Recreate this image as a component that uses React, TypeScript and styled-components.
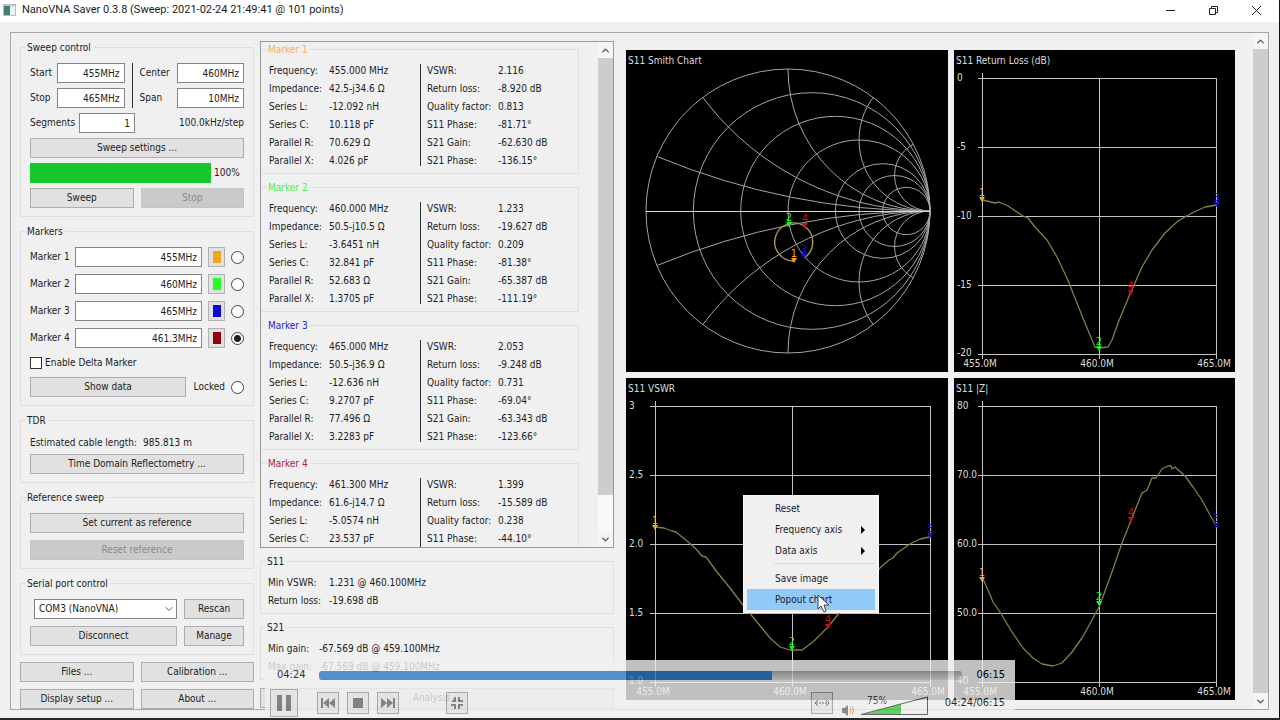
import React from "react";
import styled, { createGlobalStyle } from "styled-components";
import { ChevronDown, ChevronUp } from "lucide-react";

const uiFont = `"DejaVu Sans Condensed", "DejaVu Sans", Tahoma, sans-serif`;
const titleFont = `Roboto, "Open Sans", sans-serif`;

const GlobalStyle = createGlobalStyle`
  * { box-sizing: border-box; }
  body {
    margin: 0;
    background: #f0f0f1;
    color: #1c1c1c;
    font-family: ${uiFont};
    font-size: 10px;
    line-height: 14px;
  }
  button, input, select { font: inherit; color: inherit; margin: 0; }
`;

const Window = styled.div`
  min-height: 100vh;
  display: flex;
  flex-direction: column;
  border-right: 1px solid #111;
  border-bottom: 2px solid #26262a;
`;

const TitleBar = styled.header`
  display: flex;
  align-items: center;
  gap: 6px;
  height: 22px;
  padding: 0 4px 2px 3px;
  background: #fff;
`;

const Title = styled.h1`
  flex: 1;
  margin: 0;
  font: 400 11px/16px ${titleFont};
`;

const WindowButton = styled.button`
  width: 37px;
  height: 20px;
  display: grid;
  place-items: center;
  padding: 0;
  border: 0;
  background: none;
`;

const Frame = styled.main`
  flex: 1;
  display: flex;
  margin: 10px 10px 8px;
  padding-left: 9px;
  border: 1px solid #a6a6a8;
`;

const Controls = styled.div`
  width: 234px;
  flex: none;
  display: flex;
  flex-direction: column;
  gap: 7px;
  padding-top: 7px;
`;

const Group = styled.fieldset<{ $gap?: number }>`
  min-width: 0;
  margin: 0;
  padding: 9px 9px 8px;
  border: 1px solid #dededf;
  & > div { display: flex; flex-direction: column; gap: ${(p) => p.$gap ?? 7}px; }
`;

const Legend = styled.legend<{ $color?: string }>`
  height: 14px;
  padding: 0 2px 0 1px;
  margin-left: -4px;
  line-height: 16px;
  color: ${(p) => p.$color ?? "inherit"};
`;

const Line = styled.div<{ $gap?: number }>`
  display: flex;
  align-items: center;
  gap: ${(p) => p.$gap ?? 7}px;
`;

const SweepGrid = styled.div`
  display: grid;
  grid-template-columns: 27px 1fr 15px 37px 1fr;
  row-gap: 5px;
  align-items: center;
`;

const SweepDivider = styled.div`
  grid-column: 3;
  grid-row: 1 / span 2;
  justify-self: center;
  align-self: stretch;
  width: 1px;
  background: #333;
`;

const FieldLabel = styled.label<{ $width?: number }>`
  flex: none;
  width: ${(p) => (p.$width ? p.$width + "px" : "auto")};
  white-space: nowrap;
`;

const TextBox = styled.input<{ $width?: number }>`
  width: ${(p) => (p.$width ? p.$width + "px" : "100%")};
  min-width: 0;
  height: 20px;
  padding: 0 4px;
  border: 1px solid #858588;
  background: #fff;
  text-align: right;
`;

const PushRight = styled.span`
  margin-left: auto;
`;

const Button = styled.button<{ $width?: number }>`
  flex: ${(p) => (p.$width ? "none" : "1 1 0")};
  width: ${(p) => (p.$width ? p.$width + "px" : "auto")};
  min-height: 20px;
  padding: 0;
  border: 1px solid #adadaf;
  background: #e1e1e2;
  line-height: 18px;
  white-space: nowrap;
  &:disabled { color: #8b8b8d; background: #cacacb; border-color: #c4c4c5; }
`;

const Progress = styled.div`
  flex: 1;
  height: 20px;
  background: #18c72b;
`;

const ColorButton = styled.button<{ $color: string }>`
  flex: none;
  width: 17px;
  height: 20px;
  display: grid;
  place-items: center;
  padding: 0;
  border: 1px solid #b0b0b2;
  background: #e1e1e2;
  &::before { content: ""; width: 8px; height: 12px; background: ${(p) => p.$color}; }
`;

const Radio = styled.input`
  appearance: none;
  flex: none;
  width: 13px;
  height: 13px;
  border: 1px solid #444;
  border-radius: 50%;
  background: #fff;
  &:checked { background: radial-gradient(circle, #222 0 3px, #fff 4px); }
`;

const Check = styled.input`
  appearance: none;
  width: 12px;
  height: 12px;
  border: 1px solid #333;
  background: #fff;
`;

const CheckLabel = styled.label`
  display: flex;
  align-items: center;
  gap: 3px;
  height: 15px;
`;

const SelectWrap = styled.div`
  flex: 1;
  position: relative;
  margin-left: 4px;
  svg { position: absolute; right: 2px; top: 4px; pointer-events: none; }
`;

const Select = styled.select`
  appearance: none;
  display: block;
  width: 100%;
  height: 20px;
  padding: 0 4px;
  border: 1px solid #858588;
  border-radius: 0;
  background: #fff;
`;

const Readings = styled.div`
  width: 354px;
  flex: none;
  display: flex;
  flex-direction: column;
  gap: 6px;
  margin-left: 6px;
  padding-top: 8px;
`;

const MarkerPanel = styled.div`
  flex: 1 1 0;
  min-height: 120px;
  display: flex;
  overflow: hidden;
  border: 1px solid #98989b;
`;

const MarkerList = styled.div`
  flex: 1;
  display: flex;
  flex-direction: column;
  gap: 6px;
  padding-right: 19px;
`;

const DataGroup = styled(Group)<{ $marker?: boolean }>`
  flex: none;
  min-height: ${(p) => (p.$marker ? 132 : 0)}px;
  padding: 5px 7px 4px;
  border-left-color: ${(p) => (p.$marker ? "transparent" : "#dededf")};
  & > div { flex-direction: row; gap: 0; min-height: ${(p) => (p.$marker ? 108 : 0)}px; }
`;

const DataLegend = styled(Legend)`
  margin-left: -2px;
`;

const DataTable = styled.table<{ $label: number; $width?: number }>`
  align-self: flex-start;
  width: ${(p) => (p.$width ? p.$width + "px" : "auto")};
  border-collapse: collapse;
  th, td { height: 18px; padding: 1px 0 0; text-align: left; font-weight: 400; white-space: nowrap; }
  th { width: ${(p) => p.$label}px; min-width: ${(p) => p.$label}px; }
`;

const DataDivider = styled.div`
  width: 1px;
  margin: 3px 6px 3px 0;
  background: #333;
`;

const ScrollBar = styled.div<{ $rest: number }>`
  flex: none;
  width: 15px;
  display: flex;
  flex-direction: column;
  background: #fafafa;
  &::before {
    content: "";
    order: 1;
    flex: 1;
    margin-bottom: ${(p) => p.$rest}px;
    background: #cdcdce;
  }
`;

const ScrollButton = styled.button<{ $last?: boolean }>`
  order: ${(p) => (p.$last ? 2 : 0)};
  width: 100%;
  height: 16px;
  display: grid;
  place-items: center;
  padding: 0;
  border: 0;
  background: #f5f5f5;
  color: #555;
`;

const AnalysisButton = styled(Button)`
  flex: none;
  margin: 2px 0 1px;
`;

const Charts = styled.div`
  flex: 1;
  min-width: 0;
  display: grid;
  grid-template-columns: 322fr 281fr;
  align-content: start;
  gap: 6px;
  padding: 17px 18px 0 12px;
`;

const ChartCell = styled.section`
  position: relative;
  svg.plot { display: block; width: 100%; height: auto; background: #000; }
`;

const Menu = styled.div`
  position: absolute;
  left: 117px;
  top: 117px;
  width: 136px;
  padding: 2px 3px;
  background: #f0f0f1;
  border: 1px solid #fafafa;
`;

const MenuItem = styled.button<{ $active?: boolean }>`
  display: flex;
  align-items: center;
  justify-content: space-between;
  width: 100%;
  height: 21px;
  padding: 0 10px 0 28px;
  border: 0;
  background: ${(p) => (p.$active ? "#91c9f7" : "none")};
`;

const MenuRule = styled.div`
  height: 1px;
  margin: 2px 0 4px 27px;
  background: #d8d8da;
`;

const Cursor = styled.svg`
  position: absolute;
  left: 191px;
  top: 216px;
`;

const PlayerLayer = styled.div`
  position: fixed;
  left: 0;
  right: 0;
  bottom: 2px;
  display: flex;
  justify-content: center;
  pointer-events: none;
`;

const Player = styled.section`
  width: 750px;
  height: 58px;
  pointer-events: auto;
  background: #f0f0f0;
  opacity: 0.8;
  font-size: 11px;
  color: #000;
`;

const SeekRow = styled.div`
  display: flex;
  align-items: center;
  padding: 8px 10px 0 12px;
`;

const Time = styled.span<{ $width?: number }>`
  width: ${(p) => (p.$width ? p.$width + "px" : "auto")};
  white-space: nowrap;
`;

const Seek = styled.input`
  appearance: none;
  flex: 1;
  min-width: 0;
  height: 9px;
  margin-right: 14px;
  border-radius: 3px;
  background:
    linear-gradient(90deg, #2a7ac8 70.5%, transparent 70.5%),
    linear-gradient(#a8a8a8, #dcdcdc);
  &::-webkit-slider-thumb { appearance: none; width: 0; }
`;

const PlayRow = styled.div`
  display: flex;
  align-items: center;
  height: 28px;
  padding: 0 10px 0 5px;
  margin-top: 7px;
`;

const PlayButton = styled.button<{ $size?: number; $before?: number }>`
  flex: none;
  width: ${(p) => p.$size ?? 22}px;
  height: ${(p) => p.$size ?? 22}px;
  display: grid;
  place-items: center;
  margin-left: ${(p) => p.$before ?? 8}px;
  padding: 0;
  border: 1px solid #9a9a9a;
  background: #e4e4e4;
`;

const Spacer = styled.div`
  flex: 1;
`;

const Speaker = styled.svg`
  flex: none;
  margin: 14px 0 0 8px;
`;

const Volume = styled.div`
  position: relative;
  flex: none;
  width: 68px;
  height: 20px;
  margin: 5px 17px 0 6px;
  svg { display: block; }
  input { position: absolute; inset: 0; width: 100%; height: 100%; opacity: 0; }
`;

type Pt = [number, number];
type Mark = { n: number; at: Pt };

const markerColors = ["#f5a81c", "#18f02c", "#1410e0", "#c0101c"];

const markers = [
  { name: "Marker 1", freq: "455MHz", color: "#f0a818" },
  { name: "Marker 2", freq: "460MHz", color: "#20ff20" },
  { name: "Marker 3", freq: "465MHz", color: "#0c08d8" },
  { name: "Marker 4", freq: "461.3MHz", color: "#900010" },
];

const leftNames = ["Frequency:", "Impedance:", "Series L:", "Series C:", "Parallel R:", "Parallel X:"];
const rightNames = ["VSWR:", "Return loss:", "Quality factor:", "S11 Phase:", "S21 Gain:", "S21 Phase:"];

const readings = [
  {
    name: "Marker 1", color: "#f0b450",
    left: ["455.000 MHz", "42.5-j34.6 Ω", "-12.092 nH", "10.118 pF", "70.629 Ω", "4.026 pF"],
    right: ["2.116", "-8.920 dB", "0.813", "-81.71°", "-62.630 dB", "-136.15°"],
  },
  {
    name: "Marker 2", color: "#48f048",
    left: ["460.000 MHz", "50.5-j10.5 Ω", "-3.6451 nH", "32.841 pF", "52.683 Ω", "1.3705 pF"],
    right: ["1.233", "-19.627 dB", "0.209", "-81.38°", "-65.387 dB", "-111.19°"],
  },
  {
    name: "Marker 3", color: "#2424d8",
    left: ["465.000 MHz", "50.5-j36.9 Ω", "-12.636 nH", "9.2707 pF", "77.496 Ω", "3.2283 pF"],
    right: ["2.053", "-9.248 dB", "0.731", "-69.04°", "-63.343 dB", "-123.66°"],
  },
  {
    name: "Marker 4", color: "#b01c38",
    left: ["461.300 MHz", "61.6-j14.7 Ω", "-5.0574 nH", "23.537 pF"],
    right: ["1.399", "-15.589 dB", "0.238", "-44.10°"],
  },
];

function Rows({ names, values, label, width }: { names: string[]; values: string[]; label: number; width?: number }) {
  return (
    <DataTable $label={label} $width={width}>
      <tbody>
        {values.map((v, i) => (
          <tr key={names[i]}>
            <th scope="row">{names[i]}</th>
            <td>{v}</td>
          </tr>
        ))}
      </tbody>
    </DataTable>
  );
}

function Marks({ marks }: { marks: Mark[] }) {
  return (
    <g fontSize="11" textAnchor="middle">
      {marks.map(({ n, at: [x, y] }) => (
        <g key={n} fill={markerColors[n - 1]}>
          <path d={`M${x - 3} ${y - 5}h6l-3 5z`} />
          <text x={x} y={y - 6}>{n}</text>
        </g>
      ))}
    </g>
  );
}

type PlotProps = {
  title: string;
  width: number;
  xs: number[];
  yLabels: string[];
  line: Pt[];
  marks: Mark[];
};

const ys = [28, 97, 166, 235, 304];

function Plot({ title, width, xs, yLabels, line, marks }: PlotProps) {
  return (
    <svg className="plot" viewBox={`0 0 ${width} 322`} fill="none" fontFamily={uiFont}>
      <g stroke="#c4c4c4" strokeWidth="1" shapeRendering="crispEdges">
        {ys.map((y) => <path key={y} d={`M24 ${y + 0.5}H${xs[2]}`} />)}
        {xs.map((x, i) => <path key={x} d={`M${x + 0.5} ${i ? 28 : 23}V309`} />)}
      </g>
      <g fill="#dcdcdc" fontSize="10">
        <text x="2" y="14">{title}</text>
        {yLabels.map((t, i) => <text key={t} x="3" y={ys[i] + (i === 4 ? 2 : 3)}>{t}</text>)}
        {["455.0M", "460.0M", "465.0M"].map((t, i) => (
          <text key={t} x={xs[i] - 2} y="317" textAnchor="middle">{t}</text>
        ))}
      </g>
      <polyline points={line.map((p) => p.join()).join(" ")} stroke="#857e48" strokeWidth="1.3" strokeLinejoin="round" />
      <Marks marks={marks} />
    </svg>
  );
}

const R = 142;
const cx = 162;
const cy = 161;

function Smith() {
  return (
    <svg className="plot" viewBox="0 0 322 322" fill="none" fontFamily={uiFont}>
      <clipPath id="unit"><circle cx={cx} cy={cy} r={R} /></clipPath>
      <g stroke="#a4a4a4" strokeWidth="1">
        <circle cx={cx} cy={cy} r={R} />
        {[0.2, 0.5, 1, 2, 3, 5].map((r) => (
          <circle key={r} cx={cx + (R * r) / (r + 1)} cy={cy} r={R / (r + 1)} />
        ))}
        <g clipPath="url(#unit)">
          {[0.2, 0.5, 1, 2, 4].map((x) => (
            <g key={x}>
              <circle cx={cx + R} cy={cy - R / x} r={R / x} />
              <circle cx={cx + R} cy={cy + R / x} r={R / x} />
            </g>
          ))}
        </g>
        <path d={`M${cx - R} ${cy + 0.5}H${cx + R}`} stroke="#d8d8d8" />
      </g>
      <text x="2" y="14" fill="#dcdcdc" fontSize="10">S11 Smith Chart</text>
      <path d="M168 211a19 19 0 1 1 10 -3" stroke="#a8944c" strokeWidth="1.4" />
      <Marks marks={[{ n: 4, at: [179, 178] }, { n: 3, at: [178, 209] }, { n: 2, at: [163, 177] }, { n: 1, at: [168, 213] }]} />
    </svg>
  );
}

const returnLoss: Pt[] = [[29,150],[41,153],[45,152],[54,156],[69,166],[74,168],[81,177],[93,190],[103,207],[113,228],[123,253],[131,273],[141,297],[145,298],[154,297],[158,290],[164,273],[176,244],[188,217],[198,200],[211,183],[224,171],[238,163],[251,157],[263,155]];
const vswr: Pt[] = [[29,149],[38,150],[46,153],[50,154],[61,163],[70,171],[76,178],[80,179],[91,194],[104,210],[117,227],[131,244],[144,260],[154,269],[164,272],[176,272],[187,264],[201,250],[214,234],[234,210],[256,188],[263,182],[267,180],[271,175],[284,166],[294,161],[304,159]];
const impedance: Pt[] = [[29,201],[34,212],[39,224],[46,234],[58,254],[69,270],[79,280],[88,286],[99,288],[108,285],[118,274],[128,260],[138,242],[146,227],[158,194],[168,165],[178,140],[188,115],[193,112],[198,100],[202,100],[208,91],[214,88],[217,88],[218,91],[221,89],[231,98],[239,109],[248,122],[256,137],[263,149]];

function SweepControl() {
  return (
    <Group $gap={5}>
      <Legend>Sweep control</Legend>
      <div>
        <SweepGrid>
          <FieldLabel htmlFor="start">Start</FieldLabel>
          <TextBox id="start" defaultValue="455MHz" />
          <SweepDivider />
          <FieldLabel htmlFor="center">Center</FieldLabel>
          <TextBox id="center" defaultValue="460MHz" />
          <FieldLabel htmlFor="stop">Stop</FieldLabel>
          <TextBox id="stop" defaultValue="465MHz" />
          <FieldLabel htmlFor="span">Span</FieldLabel>
          <TextBox id="span" defaultValue="10MHz" />
        </SweepGrid>
        <Line $gap={0}>
          <FieldLabel htmlFor="segments" $width={49}>Segments</FieldLabel>
          <TextBox id="segments" $width={56} defaultValue="1" />
          <PushRight>100.0kHz/step</PushRight>
        </Line>
        <Line><Button>Sweep settings ...</Button></Line>
        <Line $gap={3}>
          <Progress role="progressbar" aria-valuenow={100} aria-label="Sweep progress" />
          <FieldLabel as="span" $width={30}>100%</FieldLabel>
        </Line>
        <Line><Button>Sweep</Button><Button disabled>Stop</Button></Line>
      </div>
    </Group>
  );
}

function MarkerControl() {
  return (
    <Group>
      <Legend>Markers</Legend>
      <div>
        {markers.map((m, i) => (
          <Line key={m.name} $gap={6}>
            <FieldLabel htmlFor={`m${i}`} $width={39}>{m.name}</FieldLabel>
            <TextBox id={`m${i}`} defaultValue={m.freq} />
            <ColorButton $color={m.color} aria-label={`${m.name} color`} />
            <Radio type="radio" name="active" defaultChecked={i === 3} aria-label={m.name} />
          </Line>
        ))}
        <CheckLabel><Check type="checkbox" />Enable Delta Marker</CheckLabel>
        <Line $gap={6}>
          <Button $width={156}>Show data</Button>
          <PushRight><label htmlFor="locked">Locked</label></PushRight>
          <Radio id="locked" type="radio" name="locked" />
        </Line>
      </div>
    </Group>
  );
}

export default function App() {
  return (
    <Window>
      <GlobalStyle />
      <TitleBar>
        <svg width="13" height="12" viewBox="0 0 13 12">
          <path d="M0 0h13v12H0z" fill="#b9c0c4" />
          <path d="M1 2h11v9H1z" fill="#eef1f2" />
          <path d="M1 2h6v9H1z" fill="#3f7f72" />
        </svg>
        <Title>NanoVNA Saver 0.3.8 (Sweep: 2021-02-24 21:49:41 @ 101 points)</Title>
        <WindowButton aria-label="Minimize">
          <svg width="10" height="10"><path d="M0 5.500h9" stroke="#222" /></svg>
        </WindowButton>
        <WindowButton aria-label="Restore">
          <svg width="11" height="11" fill="none" stroke="#222">
            <path d="M1.500 3.500h6v6h-6zM3.500 3.500v-2h6v6h-2" />
          </svg>
        </WindowButton>
        <WindowButton aria-label="Close">
          <svg width="11" height="11"><path d="M1 1l9 9M10 1l-9 9" stroke="#222" /></svg>
        </WindowButton>
      </TitleBar>

      <Frame>
        <Controls>
          <SweepControl />
          <MarkerControl />
          <Group $gap={4}>
            <Legend>TDR</Legend>
            <div>
              <Line $gap={6}><span>Estimated cable length:</span><span>985.813 m</span></Line>
              <Line><Button>Time Domain Reflectometry ...</Button></Line>
            </div>
          </Group>
          <Group>
            <Legend>Reference sweep</Legend>
            <div>
              <Line><Button>Set current as reference</Button></Line>
              <Line><Button disabled>Reset reference</Button></Line>
            </div>
          </Group>
          <Group>
            <Legend>Serial port control</Legend>
            <div>
              <Line>
                <SelectWrap>
                  <Select aria-label="Serial port"><option>COM3 (NanoVNA)</option></Select>
                  <ChevronDown size={12} color="#555" strokeWidth={2} />
                </SelectWrap>
                <Button $width={60}>Rescan</Button>
              </Line>
              <Line><Button>Disconnect</Button><Button $width={60}>Manage</Button></Line>
            </div>
          </Group>
          <Line><Button>Files ...</Button><Button>Calibration ...</Button></Line>
          <Line><Button>Display setup ...</Button><Button>About ...</Button></Line>
        </Controls>

        <Readings>
          <MarkerPanel>
            <MarkerList>
              {readings.map((m) => (
                <DataGroup key={m.name} $marker>
                  <DataLegend $color={m.color}>{m.name}</DataLegend>
                  <div>
                    <Rows names={leftNames} values={m.left} label={60} width={151} />
                    <DataDivider />
                    <Rows names={rightNames} values={m.right} label={71} />
                  </div>
                </DataGroup>
              ))}
            </MarkerList>
            <ScrollBar $rest={36}>
              <ScrollButton aria-label="Scroll up"><ChevronUp size={11} strokeWidth={3} /></ScrollButton>
              <ScrollButton $last aria-label="Scroll down"><ChevronDown size={11} strokeWidth={3} /></ScrollButton>
            </ScrollBar>
          </MarkerPanel>
          <DataGroup>
            <DataLegend>S11</DataLegend>
            <div><Rows names={["Min VSWR:", "Return loss:"]} values={["1.231 @ 460.100MHz", "-19.698 dB"]} label={61} /></div>
          </DataGroup>
          <DataGroup>
            <DataLegend>S21</DataLegend>
            <div><Rows names={["Min gain:", "Max gain:"]} values={["-67.569 dB @ 459.100MHz", "-67.569 dB @ 459.100MHz"]} label={51} /></div>
          </DataGroup>
          <AnalysisButton>Analysis ...</AnalysisButton>
        </Readings>

        <Charts>
          <ChartCell><Smith /></ChartCell>
          <ChartCell>
            <Plot title="S11 Return Loss (dB)" width={281} xs={[28, 145, 262]} yLabels={["0", "-5", "-10", "-15", "-20"]} line={returnLoss}
              marks={[{ n: 1, at: [28, 152] }, { n: 4, at: [177, 245] }, { n: 2, at: [145, 301] }, { n: 3, at: [263, 157] }]} />
          </ChartCell>
          <ChartCell>
            <Plot title="S11 VSWR" width={322} xs={[29, 166, 304]} yLabels={["3", "2.5", "2.0", "1.5", "1.0"]} line={vswr}
              marks={[{ n: 1, at: [29, 152] }, { n: 4, at: [202, 251] }, { n: 2, at: [166, 273] }, { n: 3, at: [304, 160] }]} />
            <Menu>
              <MenuItem>Reset</MenuItem>
              <MenuItem>Frequency axis<svg width="4" height="8"><path d="M0 0l4 4-4 4z" /></svg></MenuItem>
              <MenuItem>Data axis<svg width="4" height="8"><path d="M0 0l4 4-4 4z" /></svg></MenuItem>
              <MenuRule />
              <MenuItem>Save image</MenuItem>
              <MenuItem $active>Popout chart</MenuItem>
            </Menu>
            <Cursor width="13" height="19" viewBox="0 0 13 19">
              <path d="M1 1v14l3-3 3 6 2-1-2-6h5z" fill="#fff" stroke="#444" />
            </Cursor>
          </ChartCell>
          <ChartCell>
            <Plot title="S11 |Z|" width={281} xs={[28, 145, 262]} yLabels={["80", "70.0", "60.0", "50.0", "40"]} line={impedance}
              marks={[{ n: 1, at: [28, 204] }, { n: 4, at: [177, 144] }, { n: 2, at: [145, 228] }, { n: 3, at: [262, 150] }]} />
          </ChartCell>
        </Charts>

        <ScrollBar $rest={0}>
          <ScrollButton aria-label="Scroll up"><ChevronUp size={11} strokeWidth={3} /></ScrollButton>
          <ScrollButton $last aria-label="Scroll down"><ChevronDown size={11} strokeWidth={3} /></ScrollButton>
        </ScrollBar>
      </Frame>

      <PlayerLayer>
        <Player>
          <SeekRow>
            <Time $width={42}>04:24</Time>
            <Seek type="range" aria-label="Seek" min={0} max={375} defaultValue={264} />
            <Time>06:15</Time>
          </SeekRow>
          <PlayRow>
            <PlayButton $size={28} $before={0} aria-label="Pause">
              <svg width="16" height="16" fill="#6c6c6c"><path d="M1 0h5v16H1zM10 0h5v16h-5z" /></svg>
            </PlayButton>
            <PlayButton $before={19} aria-label="Previous">
              <svg width="16" height="12" fill="#6c6c6c"><path d="M1 1h2v10H1zM9 1v10L3 6zM15 1v10L9 6z" /></svg>
            </PlayButton>
            <PlayButton aria-label="Stop">
              <svg width="10" height="10" fill="#6c6c6c"><path d="M0 0h10v10H0z" /></svg>
            </PlayButton>
            <PlayButton aria-label="Next">
              <svg width="16" height="12" fill="#6c6c6c"><path d="M13 1h2v10h-2zM7 1v10l6-5zM1 1v10l6-5z" /></svg>
            </PlayButton>
            <PlayButton $before={47} aria-label="Exit full screen">
              <svg width="14" height="14" fill="#6c6c6c">
                <path d="M4 1h2v5H1L4 3zM8 1h2v3h3v2H8zM1 8h5v5H4v-3H1zM8 8h5v2h-3v3H8z" />
              </svg>
            </PlayButton>
            <Spacer />
            <PlayButton aria-label="Extend controls">
              <svg width="16" height="8" fill="none" stroke="#555">
                <path d="M4 1L1 4l3 3M12 1l3 3-3 3" />
                <path d="M2 4h12" strokeDasharray="2 1" />
              </svg>
            </PlayButton>
            <Speaker width="13" height="13" fill="none">
              <path d="M1 4h2l4-3v11L3 9H1z" fill="#777" />
              <path d="M9 4q2 2.500 0 5M11 2q3 4.500 0 9" stroke="#d8862c" />
            </Speaker>
            <Volume>
              <svg width="68" height="20">
                <path d="M1 19L41 7.500V19z" fill="#3cc83c" />
                <path d="M1 18.500L67.500 1v17.500z" fill="none" stroke="#444" />
                <text x="7" y="8" fontSize="10" fill="#444">75%</text>
              </svg>
              <input type="range" defaultValue={75} aria-label="Volume" />
            </Volume>
            <Time>04:24/06:15</Time>
          </PlayRow>
        </Player>
      </PlayerLayer>
    </Window>
  );
}
